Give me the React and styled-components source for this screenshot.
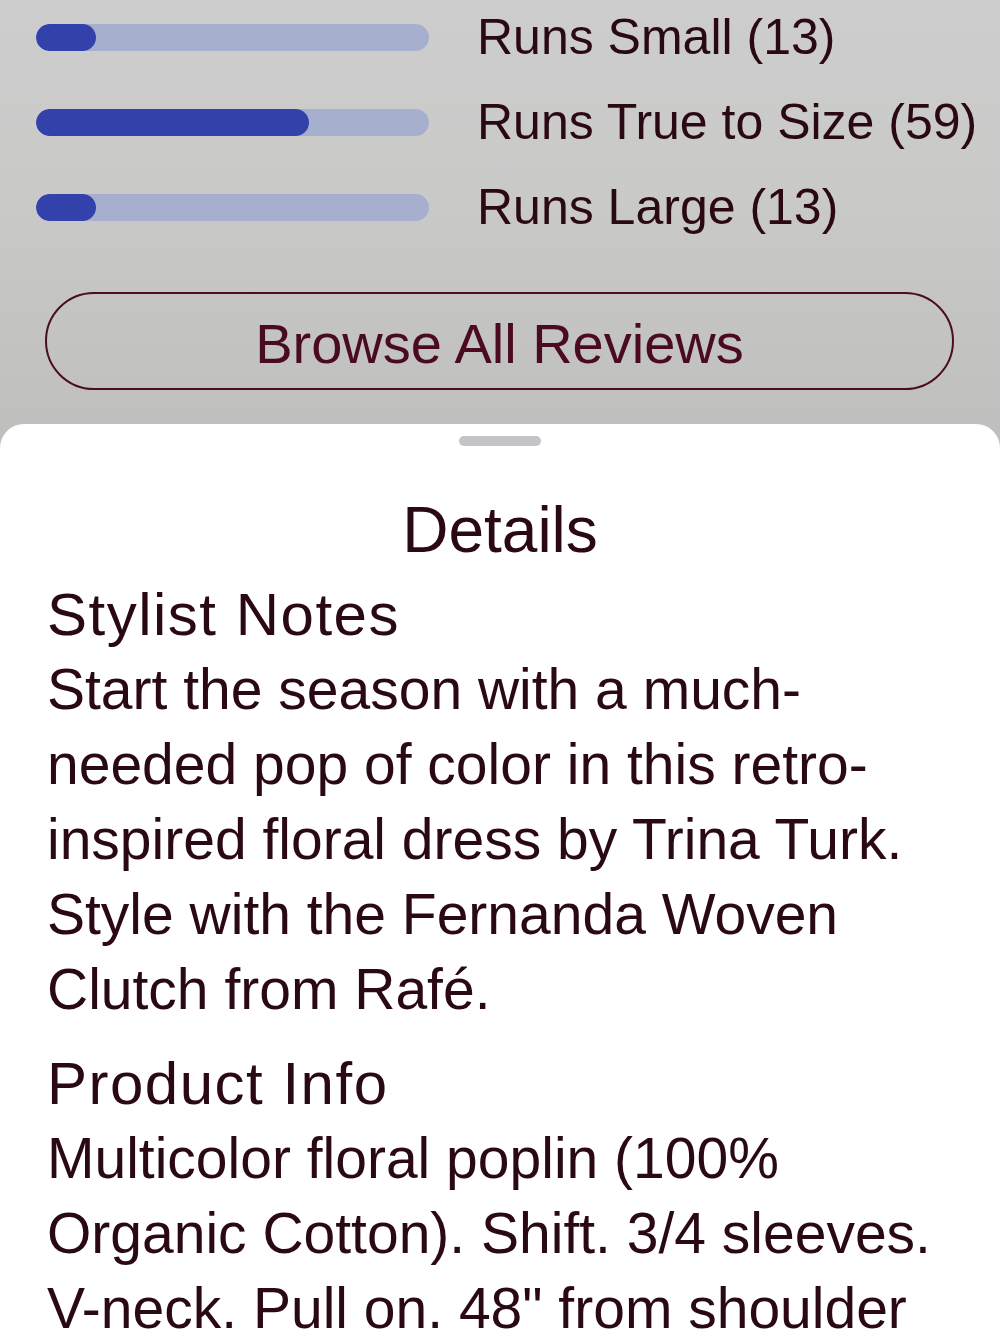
import React from 'react';
import styled, { createGlobalStyle } from 'styled-components';

const GlobalStyle = createGlobalStyle`
    html, body {
        margin: 0;
        padding: 0;
        background: #c4c4c3;
    }
    body {
        font-family: 'Liberation Sans', Arial, Helvetica, sans-serif;
        color: #2a0912;
    }
`;

const Screen = styled.div`
    width: 1000px;
    min-height: 1333px;
    overflow: hidden;
    background: linear-gradient(180deg, #cdcdcd 0px, #c9c9c8 200px, #bfc0be 430px, #bfc0be 100%);
    display: flex;
    flex-direction: column;
`;

const FitSection = styled.section`
    padding: 7px 0 0 36px;
    display: flex;
    flex-direction: column;
    gap: 25px;
`;

const FitRow = styled.div`
    height: 60px;
    display: flex;
    align-items: center;
    gap: 48px;
`;

const Track = styled.div`
    width: 393px;
    height: 27px;
    border-radius: 14px;
    background: #a7afcf;
    overflow: hidden;
    flex-shrink: 0;
`;

const Fill = styled.div`
    height: 100%;
    border-radius: 14px;
    background: #3341ab;
`;

const FitLabel = styled.span`
    font-size: 50px;
    line-height: 60px;
    color: #2a0912;
    white-space: nowrap;
`;

const BrowseButton = styled.button`
    margin: 55px 0 0 45px;
    width: 909px;
    height: 98px;
    border: 2px solid #4a0d22;
    border-radius: 49px;
    background: transparent;
    font-family: 'Liberation Sans', Arial, Helvetica, sans-serif;
    font-size: 56px;
    color: #4a0b22;
    display: flex;
    align-items: center;
    justify-content: center;
    padding: 0;
    padding-top: 4px;
    cursor: pointer;
`;

const Sheet = styled.div`
    margin-top: 34px;
    flex: 1;
    background: #ffffff;
    border-radius: 24px 24px 0 0;
    padding: 12px 47px 40px;
    display: flex;
    flex-direction: column;
`;

const Handle = styled.div`
    align-self: center;
    width: 82px;
    height: 10px;
    border-radius: 5px;
    background: #c4c4c8;
`;

const SheetTitle = styled.h2`
    margin: 46px 0 0;
    text-align: center;
    font-weight: 400;
    font-size: 64px;
    line-height: 76px;
    color: #2a0912;
`;

const SectionTitle = styled.h3`
    margin: ${p => p.$gap}px 0 0;
    font-weight: 400;
    font-size: 60px;
    line-height: 75px;
    letter-spacing: 1.5px;
    color: #2a0912;
`;

const Body = styled.p`
    margin: 0;
    font-size: 57px;
    line-height: 75px;
    color: #2a0912;
`;

const fit = [
    { label: 'Runs Small', count: 13 },
    { label: 'Runs True to Size', count: 59 },
    { label: 'Runs Large', count: 13 },
];

const App = () => {
    const total = fit.reduce((s, f) => s + f.count, 0);
    return (
        <>
            <GlobalStyle />
            <Screen>
                <FitSection>
                    {fit.map(f => (
                        <FitRow key={f.label}>
                            <Track>
                                <Fill style={{ width: `${Math.round((f.count / total) * 393)}px` }} />
                            </Track>
                            <FitLabel>{f.label} ({f.count})</FitLabel>
                        </FitRow>
                    ))}
                </FitSection>
                <BrowseButton type="button">Browse All Reviews</BrowseButton>
                <Sheet>
                    <Handle />
                    <SheetTitle>Details</SheetTitle>
                    <SectionTitle $gap={9}>Stylist Notes</SectionTitle>
                    <Body>
                        Start the season with a much-needed pop of color in this retro-inspired floral dress by Trina Turk. Style with the Fernanda Woven Clutch from Rafé.
                    </Body>
                    <SectionTitle $gap={19}>Product Info</SectionTitle>
                    <Body>
                        Multicolor floral poplin (100% Organic Cotton). Shift. 3/4 sleeves. V-neck. Pull on. 48" from shoulder to hem. Machine wash cold. Imported.
                    </Body>
                </Sheet>
            </Screen>
        </>
    );
};

export default App;
